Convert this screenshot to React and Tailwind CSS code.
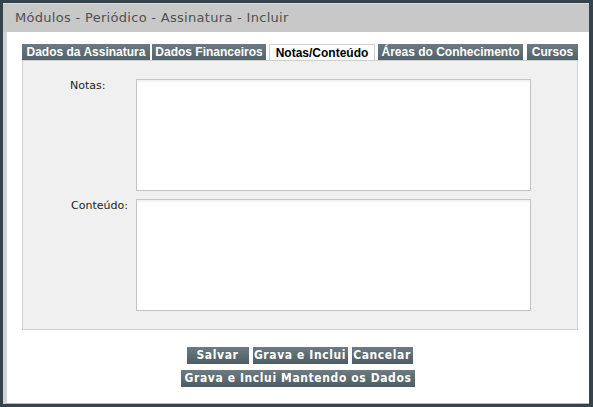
import React from 'react'

const tabs = [
  { label: 'Dados da Assinatura', w: 'w-[128px]' },
  { label: 'Dados Financeiros', w: 'w-[114px]' },
  { label: 'Notas/Conteúdo', w: 'w-[106px]', active: true },
  { label: 'Áreas do Conhecimento', w: 'w-[145px]' },
  { label: 'Cursos', w: 'w-[51px]' },
]

function Btn({ children, className = '' }) {
  return (
    <button
      className={
        'h-[17px] bg-gradient-to-b from-[#6c7c82] to-[#4c5c62] text-white text-[12px] font-bold leading-[17px] whitespace-nowrap tracking-[0.6px] ' +
        className
      }
      style={{ fontFamily: '"DejaVu Sans Condensed", "DejaVu Sans", Verdana, sans-serif' }}
    >
      {children}
    </button>
  )
}

export default function App() {
  return (
    <div className="w-[593px] h-[407px] bg-[#34444a] pt-[3px] pl-[3px] pr-[4px] pb-[3px] flex flex-col">
      {/* title */}
      <div className="h-[29px] bg-[#c8c8c8] border-t border-[#dcdcdc] flex items-center pl-[12px]">
        <span
          className="text-[13px] text-[#505050] tracking-[0.3px]"
          style={{ fontFamily: '"DejaVu Sans", Verdana, sans-serif' }}
        >
          Módulos - Periódico - Assinatura - Incluir
        </span>
      </div>
      <div className="flex-1 bg-white border-l-[4px] border-[#d4d4d4] border-b border-b-[#b8b8b8] flex flex-col">
        <div className="pt-[12px] pl-[15px]">
          <div className="flex items-end gap-[2px]" style={{ fontFamily: '"Liberation Sans", Arial, sans-serif' }}>
            {tabs.map((t, i) => (
              <div
                key={t.label}
                className={
                  t.w +
                  ' h-[16px] flex items-center justify-center text-[12px] font-bold ' +
                  (t.active
                    ? 'bg-white text-black border-t border-l border-r border-[#d0d0d0] mx-[1px]'
                    : 'bg-gradient-to-b from-[#6a7a80] to-[#52626a] text-white') +
                  (i === 4 ? ' ml-[2px]' : '')
                }
              >
                {t.label}
              </div>
            ))}
          </div>
          <div
            className="w-[556px] h-[270px] bg-[#f0f0f0] border border-[#cfcfcf] pt-[18px]"
            style={{ fontFamily: '"DejaVu Sans", Verdana, sans-serif' }}
          >
            <div className="flex">
              <div className="w-[113px] pl-[47px] text-[11px] text-[#222] -mt-[1px]">Notas:</div>
              <div className="w-[395px] h-[112px] bg-white border border-[#c4c4c4] shadow-[inset_0_2px_2px_rgba(0,0,0,0.05)]" />
            </div>
            <div className="flex mt-[8px]">
              <div className="w-[113px] pl-[48px] text-[11px] text-[#222] -mt-[1px]">Conteúdo:</div>
              <div className="w-[395px] h-[112px] bg-white border border-[#c4c4c4] shadow-[inset_0_2px_2px_rgba(0,0,0,0.05)]" />
            </div>
          </div>
        </div>
        <div className="flex flex-col items-center mt-[17px] gap-[6px]">
          <div className="flex gap-[4px] pl-[3px]">
            <Btn className="w-[62px]">Salvar</Btn>
            <Btn className="w-[95px]">Grava e Inclui</Btn>
            <Btn className="w-[61px]">Cancelar</Btn>
          </div>
          <Btn className="w-[234px]">Grava e Inclui Mantendo os Dados</Btn>
        </div>
      </div>
    </div>
  )
}
